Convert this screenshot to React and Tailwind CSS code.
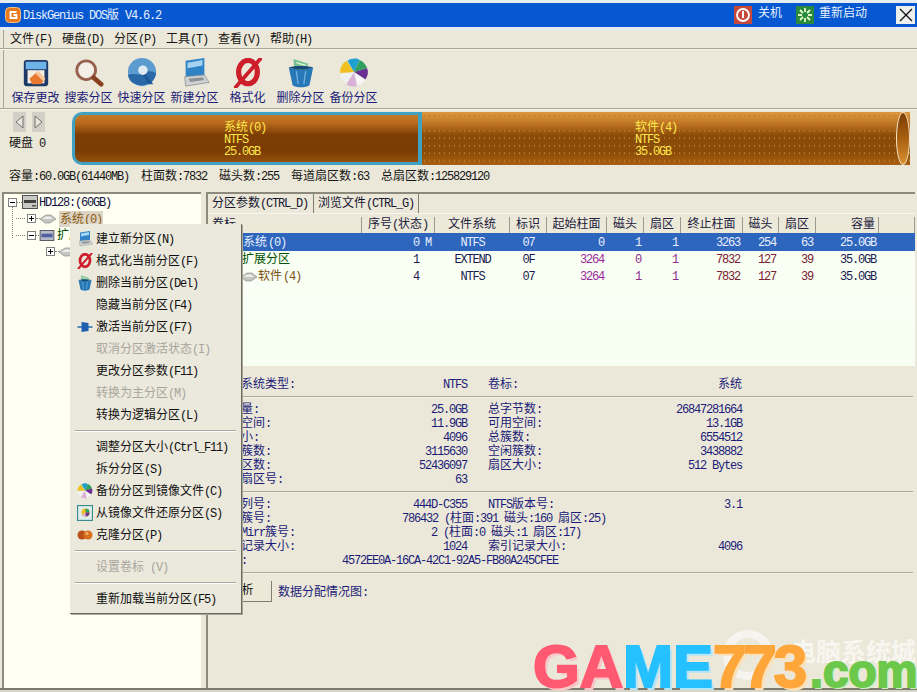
import React from "react";

const T = ({ children }) => {
  const parts = String(children).split(/([\u3000-\u9fff\uff00-\uffef]+)/);
  return (
    <>
      {parts.map((p, i) =>
        p === "" ? null : /[\u3000-\u9fff\uff00-\uffef]/.test(p) ? (
          <span key={i} className="text-[12px]">{p}</span>
        ) : (
          <span key={i} className="text-[12px] tracking-[-1.2px] whitespace-pre">{p}</span>
        )
      )}
    </>
  );
};

const SaveIcon = ({ className }) => (
  <svg viewBox="0 0 32 32" className={className}>
    <rect x="3" y="2" width="26" height="28" rx="3" fill="#1d3a66" />
    <rect x="5" y="4" width="22" height="8" fill="#6fb2e8" />
    <rect x="7" y="13" width="18" height="14" fill="#f4ede2" />
    <path d="M9 22l9-8 8 8-5 6H12z" fill="#e87830" />
    <path d="M18 14l8 8-2 3-9-9z" fill="#f6c8a0" />
  </svg>
);
const SearchIcon = ({ className }) => (
  <svg viewBox="0 0 32 32" className={className}>
    <circle cx="13" cy="13" r="10" fill="#f3efe6" stroke="#96614e" strokeWidth="3" />
    <path d="M21 21l8 7" stroke="#8a4020" strokeWidth="5" strokeLinecap="round" />
  </svg>
);
const QuickIcon = ({ className }) => (
  <svg viewBox="0 0 32 32" className={className}>
    <circle cx="16" cy="15" r="15" fill="#5b9bd0" />
    <path d="M1 18c8-3 10 2 16-2 5-3 10-2 14 0-1 8-7 13-15 13S2 25 1 18z" fill="#2a68a8" />
    <circle cx="17" cy="13" r="5" fill="#dfeaf3" />
    <path d="M20 17l8 11h-5l-6-9z" fill="#1f5a98" />
  </svg>
);
const LaptopIcon = ({ className }) => (
  <svg viewBox="0 0 32 32" className={className}>
    <path d="M6 3l20-3v18l-20 2z" fill="#2f83c6" />
    <path d="M8 5l16-3v6L8 11z" fill="#a5d4f2" />
    <path d="M5 20l21-2 5 8-25 4z" fill="#cfd2d2" stroke="#7c8284" strokeWidth="0.7" />
    <path d="M9 22l15-1.5 2 3-15 2z" fill="#8c9194" />
  </svg>
);
const FormatIcon = ({ className }) => (
  <svg viewBox="0 0 32 32" className={className}>
    <ellipse cx="16" cy="15" rx="10" ry="12.5" fill="none" stroke="#cc1f2b" strokeWidth="5.5" />
    <path d="M3 31L29 1" stroke="#cc1f2b" strokeWidth="4" strokeLinecap="round" />
  </svg>
);
const BinIcon = ({ className }) => (
  <svg viewBox="0 0 32 32" className={className}>
    <path d="M8 1l16 5-4 8H9z" fill="#78c090" />
    <path d="M11 5l10 3" stroke="#d8f0d8" strokeWidth="1.5" />
    <path d="M3 10c8 3 18 3 26 0l-4 19c-4 3-14 3-18 0z" fill="#2878b8" />
    <path d="M3 10c8-2 18-2 26 0-8 3-18 3-26 0z" fill="#164a78" />
    <path d="M11 14l2 14M21 14l-2 14" stroke="#70b0e0" strokeWidth="1.4" />
  </svg>
);
const WheelIcon = ({ className }) => (
  <svg viewBox="0 0 32 32" className={className}>
    <path d="M16 15L9 3c4-3 10-3 13-1z" fill="#20a0d0" />
    <path d="M16 15l6-13c4 2 7 5 8 9z" fill="#30a060" />
    <path d="M16 15l14-4c2 5 0 9-2 12z" fill="#6a3090" />
    <path d="M16 15l12 8c-2 3-5 6-8 6z" fill="#f6f6f6" />
    <path d="M16 15l3 15c-4 1-9 0-11-2z" fill="#d8b0d8" />
    <path d="M16 15L8 27c-4-3-7-7-7-10z" fill="#f0f0f0" />
    <path d="M16 15L1 16c0-5 2-10 7-13z" fill="#f0c020" />
  </svg>
);
const RestoreIcon = ({ className }) => (
  <svg viewBox="0 0 32 32" className={className}>
    <rect x="1" y="1" width="30" height="30" fill="#dfeee8" stroke="#3a8a90" strokeWidth="2.5" />
    <circle cx="17" cy="15" r="8" fill="#f0c020" />
    <path d="M17 15l0-8a8 8 0 0 1 8 8z" fill="#30a060" />
    <path d="M17 15l8 0a8 8 0 0 1-8 8z" fill="#6a3090" />
    <path d="M17 15l0 8a8 8 0 0 1-8-3z" fill="#d8b0d8" />
  </svg>
);
const CloneIcon = ({ className }) => (
  <svg viewBox="0 0 32 32" className={className}>
    <circle cx="10" cy="16" r="9" fill="#b8501c" />
    <circle cx="22" cy="16" r="9" fill="#d8701c" />
    <circle cx="20" cy="13" r="3" fill="#f0b070" />
  </svg>
);
const ActivateIcon = ({ className }) => (
  <svg viewBox="0 0 32 32" className={className}>
    <path d="M1 16h30" stroke="#1f6ab0" strokeWidth="3" />
    <path d="M9 6l14 2v16L9 26z" fill="#1f5fb0" />
  </svg>
);
const HddSmall = ({ className }) => (
  <svg viewBox="0 0 16 10" className={className}>
    <path d="M0 5l6-4h5l5 4-6 4H5z" fill="#c4c4c0" stroke="#808080" strokeWidth="0.6" />
    <path d="M2 5l4-2.5h4L13 5z" fill="#ecece8" />
  </svg>
);
const DiskBox = ({ className }) => (
  <svg viewBox="0 0 16 14" className={className}>
    <rect x="0.5" y="0.5" width="15" height="13" fill="#c8c8c4" stroke="#505050" />
    <rect x="2" y="5" width="12" height="3" fill="#404040" />
    <rect x="10" y="10" width="4" height="1.5" fill="#505050" />
  </svg>
);
const ExtBox = ({ className }) => (
  <svg viewBox="0 0 16 12" className={className}>
    <rect x="0.5" y="0.5" width="15" height="11" fill="#b8bcc8" stroke="#505060" />
    <rect x="2" y="4" width="12" height="4" fill="#5060a0" />
  </svg>
);

const Expander = ({ open }) => (
  <span className="z-10 flex w-[9px] h-[9px] shrink-0 items-center justify-center border border-[#808080] bg-white text-[9px] leading-none text-black">
    <svg viewBox="0 0 7 7" className="w-[7px] h-[7px]">
      <path d="M1 3.5h5" stroke="#000" />
      {!open && <path d="M3.5 1v5" stroke="#000" />}
    </svg>
  </span>
);
const Dots = ({ className }) => <span className={"border-t border-dotted border-[#808080] " + className} />;

const tools = [
  ["保存更改", SaveIcon],
  ["搜索分区", SearchIcon],
  ["快速分区", QuickIcon],
  ["新建分区", LaptopIcon],
  ["格式化", FormatIcon],
  ["删除分区", BinIcon],
  ["备份分区", WheelIcon],
];

const headers = [
  ["卷标", "justify-start pl-[4px]"],
  ["序号(状态)", "justify-center"],
  ["文件系统", "justify-center"],
  ["标识", "justify-center"],
  ["起始柱面", "justify-center"],
  ["磁头", "justify-center"],
  ["扇区", "justify-center"],
  ["终止柱面", "justify-center"],
  ["磁头", "justify-center"],
  ["扇区", "justify-center"],
  ["容量", "justify-end pr-[3px]"],
  ["", ""],
];

const Row = ({ a, b, c, d }) => (
  <div className="flex h-[14px] items-center text-[#1c1c78]">
    <div className="flex w-[250px] justify-between">
      <span><T>{a}</T></span>
      <span><T>{b}</T></span>
    </div>
    <div className="ml-[21px] flex w-[254px] justify-between">
      <span><T>{c}</T></span>
      <span><T>{d}</T></span>
    </div>
  </div>
);

const Hr = ({ className }) => <div className={"h-[2px] border-t border-[#a8a698] bg-[#f4f2e8] " + className} />;

const MenuItem = ({ label, icon: Icon, disabled }) => (
  <div className={"flex h-[22px] items-center " + (disabled ? "text-[#a8a69c]" : "text-[#101010]")}>
    <span className="flex w-[26px] shrink-0 justify-center pl-[4px]">
      {Icon ? <Icon className="w-[16px] h-[16px]" /> : null}
    </span>
    <span><T>{label}</T></span>
  </div>
);
const MenuSep = () => (
  <div className="flex h-[10px] items-center px-[5px]">
    <div className="h-[2px] w-full border-t border-[#a8a698] bg-white" />
  </div>
);

const TextCell = ({ v, color, cls }) => (
  <div className={"flex items-center " + (cls || "justify-end pr-[3px]") + " " + (color || "")}>
    <T>{v}</T>
  </div>
);
const Line = ({ sel, name, nameColor, ind, icon, seq, fs, id, c1, h1, s1, c2, h2, s2, size }) => (
  <div className={"grid grid-cols-[154px_73px_75px_37px_60px_37px_37px_62px_36px_37px_63px_36px] " + (sel ? "h-[18px] bg-[#2f66bd] pt-[1px] text-[#e8f0ff]" : "h-[17px] text-[#1a1a50]")}>
    <div className={"flex items-center gap-[1px] " + ind + " " + (sel ? "" : nameColor)}>
      {icon}
      <T>{name}</T>
    </div>
    <div className="flex items-center pl-[51px]"><T>{seq}</T></div>
    <TextCell v={fs} cls="justify-center" />
    <TextCell v={id} cls="justify-center" />
    <TextCell v={c1} color={sel ? "" : "text-[#9a2a9a]"} />
    <TextCell v={h1} color={sel ? "" : "text-[#8a2a8a]"} />
    <TextCell v={s1} color={sel ? "" : "text-[#8a2a8a]"} />
    <TextCell v={c2} color={sel ? "" : "text-[#7a2030]"} />
    <TextCell v={h2} color={sel ? "" : "text-[#7a2030]"} />
    <TextCell v={s2} color={sel ? "" : "text-[#7a2030]"} />
    <TextCell v={size} />
    <div />
  </div>
);

function Table() {
  return (
    <div>
      <div className="grid h-[16px] grid-cols-[154px_73px_75px_37px_60px_37px_37px_62px_36px_37px_63px_36px] bg-[#ece9d8] text-[#202040]">
        {headers.map(([h, cls], i) => (
          <div key={i} className={"flex items-center border-r border-[#9c9a8c] " + cls}><T>{h}</T></div>
        ))}
      </div>
      <div className="h-[133px] bg-[linear-gradient(#fbfff5,#f6fff2)]">
        <Line sel name="系统(0)" ind="pl-[35px]" seq="0 M" fs="NTFS" id="07" c1="0" h1="1" s1="1" c2="3263" h2="254" s2="63" size="25.0GB" />
        <Line name="扩展分区" nameColor="text-[#005000]" ind="pl-[34px]" seq="1" fs="EXTEND" id="0F" c1="3264" h1="0" s1="1" c2="7832" h2="127" s2="39" size="35.0GB" />
        <Line name="软件(4)" nameColor="text-[#7a5210]" ind="pl-[33px]" icon={<HddSmall className="w-[16px] h-[10px]" />} seq="4" fs="NTFS" id="07" c1="3264" h1="1" s1="1" c2="7832" h2="127" s2="39" size="35.0GB" />
      </div>
    </div>
  );
}

export default function App() {
  return (
    <div className="relative flex h-[692px] w-[917px] flex-col overflow-hidden bg-[#ebe8d9] font-['Liberation_Mono','Noto_Sans_CJK_SC',monospace] leading-none text-[#101010]">
      {/* title bar */}
      <div className="h-[3px] bg-[#e4eef0]" />
      <div className="flex h-[24px] items-center bg-[#0658d0] pl-[5px] text-[#e8f0ff]">
        <svg viewBox="0 0 16 16" className="h-[16px] w-[16px]">
          <rect x="0.5" y="0.5" width="15" height="15" rx="4" fill="#e87a20" stroke="#f8c080" />
          <path d="M11.5 5H5.5v6h6V8H8.5" fill="none" stroke="#fff" strokeWidth="1.8" />
        </svg>
        <span className="ml-[2px]"><T>DiskGenius DOS版 V4.6.2</T></span>
        <div className="ml-auto flex items-center">
          <svg viewBox="0 0 18 18" className="h-[18px] w-[18px]">
            <rect width="18" height="18" fill="#c8483c" />
            <circle cx="9" cy="9" r="6" fill="none" stroke="#fff" strokeWidth="1.8" />
            <path d="M9 5v7" stroke="#fff" strokeWidth="2" />
          </svg>
          <span className="ml-[6px] -translate-y-[2px]"><T>关机</T></span>
          <svg viewBox="0 0 18 18" className="ml-[14px] h-[18px] w-[18px]">
            <rect width="18" height="18" fill="#2a8a3c" />
            <path d="M9 2v4M9 12v4M2 9h4M12 9h4M4 4l3 3M11 11l3 3M14 4l-3 3M7 11l-3 3" stroke="#dff8c8" strokeWidth="1.8" />
          </svg>
          <span className="ml-[5px] -translate-y-[2px]"><T>重新启动</T></span>
          <div className="ml-[29px] mr-[2px] flex h-[18px] w-[19px] items-center justify-center bg-[#eef0ee]">
            <svg viewBox="0 0 14 14" className="h-[14px] w-[14px]">
              <path d="M1 1l12 12M13 1L1 13" stroke="#101010" strokeWidth="1.3" />
            </svg>
          </div>
        </div>
      </div>
      <div className="h-[3px] bg-[#e4eef0]" />
      {/* menu */}
      <div className="ml-[3px] flex h-[18px] items-center border-l border-[#a8a698] pl-[6px] text-[#151515]">
        {["文件(F)", "硬盘(D)", "分区(P)", "工具(T)", "查看(V)", "帮助(H)"].map((m) => (
          <span key={m} className="w-[52px]"><T>{m}</T></span>
        ))}
      </div>
      <div className="h-[2px] border-t border-[#a8a698] bg-[#f6f4ea]" />
      {/* toolbar */}
      <div className="ml-[3px] flex h-[58px] border-l border-[#a8a698] pl-[5px]">
        {tools.map(([label, Icon]) => (
          <div key={label} className="flex w-[53px] flex-col items-center pt-[8px] text-[#1c1c78]">
            <Icon className="h-[30px] w-[30px]" />
            <span className="mt-[2px] whitespace-nowrap"><T>{label}</T></span>
          </div>
        ))}
      </div>
      <div className="h-[2px] border-t border-[#a8a698] bg-[#f6f4ea]" />
      {/* disk map */}
      <div className="flex h-[55px] pt-[2px]">
        <div className="w-[72px] shrink-0 pl-[9px] text-[#151515]">
          <div className="flex gap-[6px] pl-[4px]">
            <div className="flex h-[20px] w-[13px] items-center justify-center bg-[#d2d0c6]">
              <svg viewBox="0 0 9 14" className="h-[14px] w-[9px]"><path d="M8 1L1 7l7 6z" fill="#e8e6dc" stroke="#707070" /></svg>
            </div>
            <div className="flex h-[20px] w-[13px] items-center justify-center bg-[#d2d0c6]">
              <svg viewBox="0 0 9 14" className="h-[14px] w-[9px]"><path d="M1 1l7 6-7 6z" fill="#e8e6dc" stroke="#707070" /></svg>
            </div>
          </div>
          <div className="mt-[3px]"><T>硬盘 0</T></div>
        </div>
        <div className="flex h-[53px] w-[838px] text-[#ffe84c]">
          <div className="flex h-full w-[350px] flex-col justify-center rounded-l-[10px] border-[3px] border-r-[4px] border-[#3fa2c2] bg-[linear-gradient(#c47a28,#b8681a_18%,#7c3e04_42%,#7a3c02_75%,#94500c)] pl-[149px] leading-[12px]">
            <div className="h-[12px]"><T>系统(0)</T></div>
            <div className="h-[12px]"><T>NTFS</T></div>
            <div className="h-[12px]"><T>25.0GB</T></div>
          </div>
          <div className="flex h-full flex-1 flex-col justify-center bg-[radial-gradient(circle,#b87c34_0.5px,transparent_0.8px),linear-gradient(#dc9840,#c87c28_18%,#8a4a08_45%,#8a4a08_75%,#a86010)] bg-[length:5px_7.5px,100%_100%] pl-[213px] leading-[12px]">
            <div className="h-[12px]"><T>软件(4)</T></div>
            <div className="h-[12px]"><T>NTFS</T></div>
            <div className="h-[12px]"><T>35.0GB</T></div>
          </div>
          <div className="z-10 -ml-[14px] h-full w-[14px] rounded-[50%] border border-[#f4e8c8] bg-[linear-gradient(#7c3e04,#a86010_50%,#d89030)]" />
        </div>
      </div>
      {/* info */}
      <div className="flex h-[22px] items-center pl-[9px] text-[#151515]">
        <span className="w-[132px]"><T>容量:60.0GB(61440MB)</T></span>
        <span className="w-[78px]"><T>柱面数:7832</T></span>
        <span className="w-[72px]"><T>磁头数:255</T></span>
        <span className="w-[90px]"><T>每道扇区数:63</T></span>
        <span><T>总扇区数:125829120</T></span>
      </div>
      <div className="h-[5px]" />
      {/* main */}
      <div className="flex min-h-0 flex-1">
        <div className="relative ml-[2px] flex w-[199px] shrink-0 flex-col gap-[2.5px] border-l-2 border-t-2 border-[#8c8a7c] bg-[#fffff2] pl-[4px] pt-[1px]">
          <span className="absolute left-[8px] top-[10px] h-[34px] border-l border-dotted border-[#808080]" />
          <div className="flex h-[14px] items-center">
            <Expander open />
            <Dots className="w-[5px]" />
            <DiskBox className="h-[14px] w-[16px]" />
            <span className="ml-[1px] text-[#101040]"><T>HD128:(60GB)</T></span>
          </div>
          <div className="flex h-[14px] items-center pl-[19px]">
            <span className="-ml-[11px] mr-[2px] w-[9px]"><Dots className="block w-[9px]" /></span>
            <Expander />
            <Dots className="w-[4px]" />
            <HddSmall className="h-[10px] w-[16px]" />
            <span className="ml-[3px] bg-[#dcd4c4] px-[1px] text-[#8a5a10]"><T>系统(0)</T></span>
          </div>
          <div className="flex h-[14px] items-center pl-[19px]">
            <span className="-ml-[11px] mr-[2px] w-[9px]"><Dots className="block w-[9px]" /></span>
            <Expander open />
            <Dots className="w-[3px]" />
            <ExtBox className="h-[11px] w-[16px]" />
            <span className="ml-[2px] text-[#005000]"><T>扩展分区</T></span>
          </div>
          <div className="flex h-[14px] items-center pl-[38px]">
            <Expander />
            <Dots className="w-[4px]" />
            <HddSmall className="h-[10px] w-[16px]" />
            <span className="ml-[2px] text-[#7a5210]"><T>软件(4)</T></span>
          </div>
        </div>
        <div className="ml-[5px] mr-[2px] flex flex-1 flex-col border-l-2 border-t-2 border-[#8c8a7c]">
          <div className="flex h-[20px] items-center gap-[2px] border-b border-[#f8f6ee] pl-[4px] text-[#151530]">
            <span className="flex h-[19px] w-[102px] items-center border-r border-[#807e70]"><T>分区参数(CTRL_D)</T></span>
            <span className="ml-[2px] flex h-[19px] w-[101px] items-center border-r border-[#807e70]"><T>浏览文件(CTRL_G)</T></span>
          </div>
          <div className="h-[3px]" />
          <Table />
          <div className="pl-[9px] pr-[2px] pt-[11px]">
            <Row a="文件系统类型:" b="NTFS" c="卷标:" d="系统" />
            <Hr className="mb-[4px] mt-[5px] -ml-[9px]" />
            <Row a="总容量:" b="25.0GB" c="总字节数:" d="26847281664" />
            <Row a="已用空间:" b="11.9GB" c="可用空间:" d="13.1GB" />
            <Row a="簇大小:" b="4096" c="总簇数:" d="6554512" />
            <Row a="已用簇数:" b="3115630" c="空闲簇数:" d="3438882" />
            <Row a="总扇区数:" b="52436097" c="扇区大小:" d="512 Bytes" />
            <Row a="起始扇区号:" b="63" c="" d="" />
            <Hr className="mb-[4px] mt-[5px] -ml-[9px]" />
            <Row a="卷序列号:" b="444D-C355" c="NTFS版本号:" d="3.1" />
            <div className="flex h-[14px] items-center text-[#1c1c78]">
              <span className="w-[185px]"><T>$MFT簇号:</T></span>
              <span><T>786432 (柱面:391 磁头:160 扇区:25)</T></span>
            </div>
            <div className="flex h-[14px] items-center text-[#1c1c78]">
              <span className="w-[214px]"><T>$MFTMirr簇号:</T></span>
              <span><T>2 (柱面:0 磁头:1 扇区:17)</T></span>
            </div>
            <Row a="文件记录大小:" b="1024" c="索引记录大小:" d="4096" />
            <div className="flex h-[14px] items-center text-[#1c1c78]">
              <span className="w-[125px]"><T>GUID:</T></span>
              <span><T>4572EE0A-16CA-42C1-92A5-FB80A245CFEE</T></span>
            </div>
            <Hr className="mb-[7px] mt-[5px] -ml-[9px]" />
            <div className="flex items-center">
              <div className="flex h-[21px] w-[55px] items-center justify-center border-b border-r border-[#807e70] bg-[#ece9d8] pr-[5px] text-[#101010]">
                <T>分析</T>
              </div>
              <span className="ml-[6px] text-[#1c1c78]"><T>数据分配情况图:</T></span>
            </div>
          </div>
        </div>
      </div>
      <div className="h-[4px] border-t-2 border-[#7c7a6c] bg-[#d8d6c8]" />

      {/* context menu */}
      <div className="absolute left-[70px] top-[224px] h-[390px] w-[172px] border-b border-r border-[#6c6a5c] bg-[#ebe8dc] pt-[4px] shadow-[1px_1px_0_#a8a698]">
        <MenuItem label="建立新分区(N)" icon={LaptopIcon} />
        <MenuItem label="格式化当前分区(F)" icon={FormatIcon} />
        <MenuItem label="删除当前分区(Del)" icon={BinIcon} />
        <MenuItem label="隐藏当前分区(F4)" />
        <MenuItem label="激活当前分区(F7)" icon={ActivateIcon} />
        <MenuItem label="取消分区激活状态(I)" disabled />
        <MenuItem label="更改分区参数(F11)" />
        <MenuItem label="转换为主分区(M)" disabled />
        <MenuItem label="转换为逻辑分区(L)" />
        <MenuSep />
        <MenuItem label="调整分区大小(Ctrl_F11)" />
        <MenuItem label="拆分分区(S)" />
        <MenuItem label="备份分区到镜像文件(C)" icon={WheelIcon} />
        <MenuItem label="从镜像文件还原分区(S)" icon={RestoreIcon} />
        <MenuItem label="克隆分区(P)" icon={CloneIcon} />
        <MenuSep />
        <MenuItem label="设置卷标 (V)" disabled />
        <MenuSep />
        <MenuItem label="重新加载当前分区(F5)" />
      </div>

      {/* watermark */}
      <div className="absolute left-[723px] top-[630px] h-[50px] w-[50px] rounded-full border-[8px] border-[#f6f4ee]" />
      <div className="absolute left-[791px] top-[638px] font-['Noto_Sans_CJK_SC',sans-serif] text-[25px] font-bold leading-none text-[#f8f6f0]">电脑系统城</div>
      <div className="absolute left-[533px] top-[637px] flex items-baseline font-['Liberation_Sans',sans-serif] font-bold leading-none">
        <span className="text-[60px] text-[#ff5a72] [-webkit-text-stroke:2px_#ff5a72] [text-shadow:3px_3px_0_#f8c8c8]">GA</span>
        <span className="text-[60px] text-[#25c0ff] [-webkit-text-stroke:2px_#25c0ff] [text-shadow:3px_3px_0_#b8e4f8]">ME</span>
        <span className="text-[60px] tracking-[-3px] text-[#ffa63a] [-webkit-text-stroke:2px_#ffa63a] [text-shadow:3px_3px_0_#fce0b8]">773</span>
        <span className="ml-[6px] text-[46px] text-[#6cc84a] [-webkit-text-stroke:2px_#6cc84a] [text-shadow:2px_2px_0_#cdeec0]">.com</span>
      </div>
    </div>
  );
}
